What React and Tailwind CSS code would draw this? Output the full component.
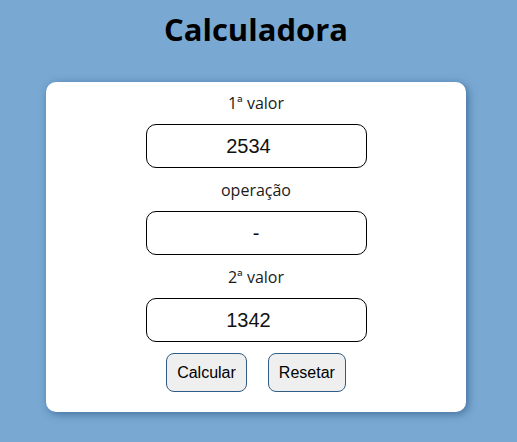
export default function App() {
  return (
    <div className="min-h-[442px] bg-[#79a9d3] font-['Open_Sans',sans-serif]">
      <div className="w-[512px] pt-[9px]">
        <h1 className="text-center text-[31px] font-bold leading-[40px] text-black">Calculadora</h1>

        {/* Card */}
        <div className="mx-auto mt-[33px] flex w-[420px] flex-col items-center rounded-[10px] bg-white pb-[20px] pt-[10px] shadow-[2px_2px_8px_rgba(30,70,120,0.6)]">
          <label className="text-[16px] leading-[22px] text-[#1a1a1a]">1ª valor</label>
          <input
            readOnly
            value="2534"
            className="mt-[10px] h-[44px] w-[221px] rounded-[10px] border border-black bg-white pr-[15px] text-center font-['Liberation_Sans',sans-serif] text-[20px] text-[#111] outline-none"
          />

          <label className="mt-[11px] text-[16px] leading-[22px] text-[#1a1a1a]">operação</label>
          <input
            readOnly
            value="-"
            className="mt-[10px] h-[44px] w-[221px] rounded-[10px] border border-black bg-white text-center font-['Liberation_Sans',sans-serif] text-[20px] text-[#111] outline-none"
          />

          <label className="mt-[11px] text-[16px] leading-[22px] text-[#1a1a1a]">2ª valor</label>
          <input
            readOnly
            value="1342"
            className="mt-[10px] h-[44px] w-[221px] rounded-[10px] border border-black bg-white pr-[15px] text-center font-['Liberation_Sans',sans-serif] text-[20px] text-[#111] outline-none"
          />

          <div className="mt-[11px] flex gap-[21px]">
            <button className="h-[39px] rounded-[8px] border border-[#2f5d86] bg-[#efefef] px-[10px] font-['Liberation_Sans',sans-serif] text-[16px] text-black">
              Calcular
            </button>
            <button className="h-[39px] rounded-[8px] border border-[#2f5d86] bg-[#efefef] px-[10px] font-['Liberation_Sans',sans-serif] text-[16px] text-black">
              Resetar
            </button>
          </div>
        </div>
      </div>
    </div>
  );
}
